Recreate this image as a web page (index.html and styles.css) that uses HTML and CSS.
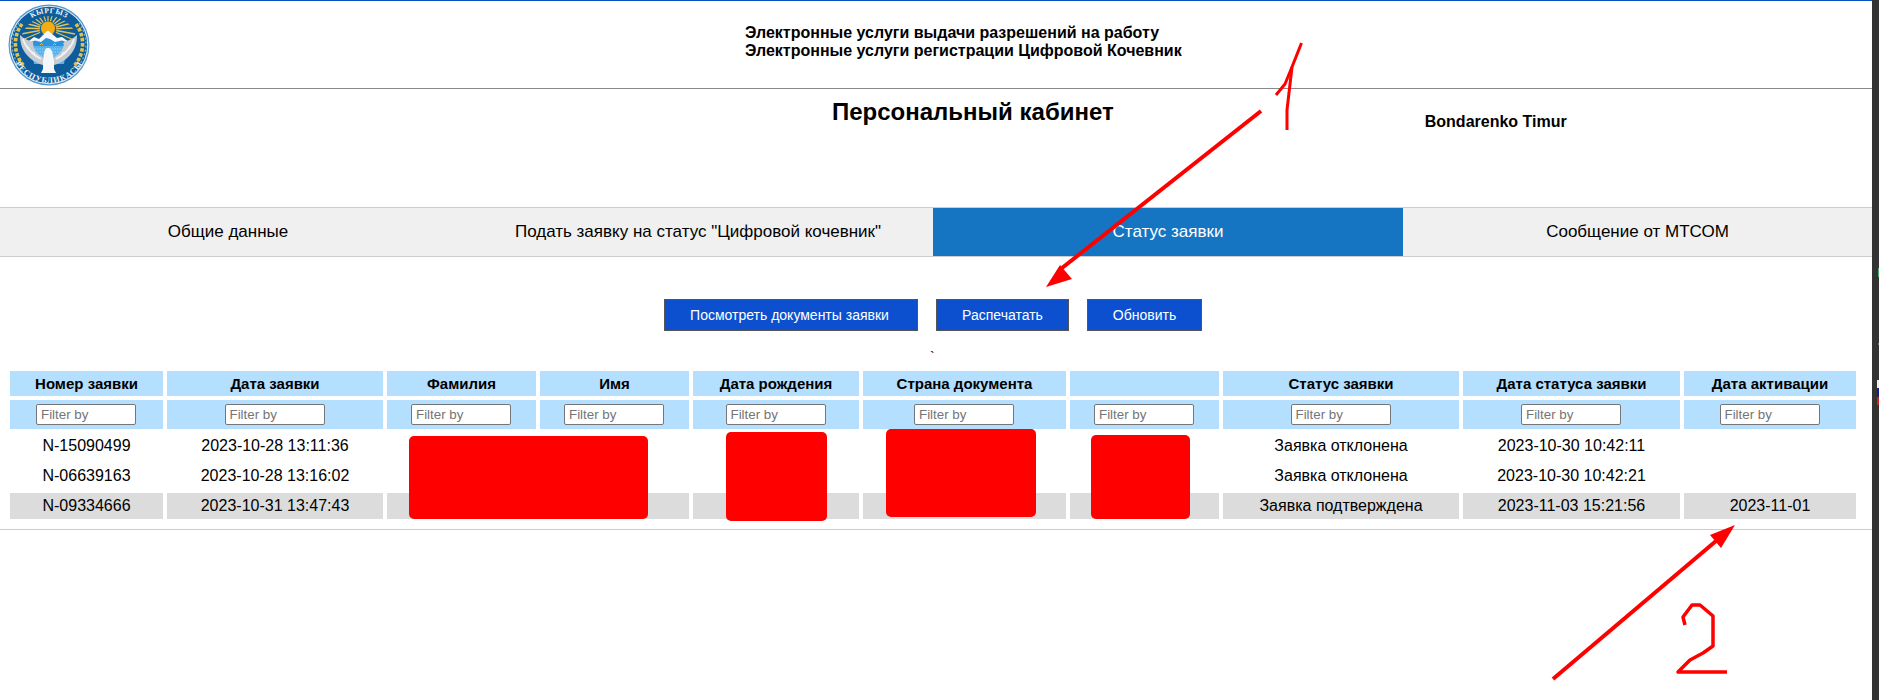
FILE: index.html
```html
<!DOCTYPE html>
<html lang="ru">
<head>
    <meta charset="UTF-8">
    <meta name="viewport" content="width=device-width, initial-scale=1.0">
    <title>Персональный кабинет</title>
    <link rel="stylesheet" href="styles.css">
</head>
<body>
    <div class="pagina">
        <header class="cabecera">
            <svg class="escudo" viewBox="0 0 82 82" width="82" height="82">
                <defs>
                    <path id="arcoArriba" d="M9 41 A32 32 0 0 1 73 41"/>
                    <path id="arcoAbajo" d="M3 41 A38 38 0 0 0 79 41"/>
                    <clipPath id="cielo"><circle cx="41" cy="41" r="29"/></clipPath>
                </defs>
                <circle cx="41" cy="41" r="40.5" fill="#4f97cf"/>
                <circle cx="41" cy="41" r="39.3" fill="#dfeaf2"/>
                <circle cx="41" cy="41" r="38.2" fill="#0d5c9c"/>
                <!-- espigas -->
                <g fill="none" stroke-linecap="butt">
                    <path d="M11 19 A36 36 0 0 0 13 64" stroke="#7fb4da" stroke-width="1.2" stroke-dasharray="2 2"/>
                    <path d="M71 19 A36 36 0 0 1 69 64" stroke="#7fb4da" stroke-width="1.2" stroke-dasharray="2 2"/>
                    <path d="M14 20 A33 33 0 0 0 16 62" stroke="#e3c14e" stroke-width="3.6" stroke-dasharray="3.5 1.6"/>
                    <path d="M68 20 A33 33 0 0 1 66 62" stroke="#e3c14e" stroke-width="3.6" stroke-dasharray="3.5 1.6"/>
                </g>
                <g clip-path="url(#cielo)">
                    <g stroke="#dcc25c" stroke-width="1.3">
                        <path d="M40 25 L14 36 M40 25 L13 30 M40 25 L14 24 M40 25 L16 19 M40 25 L19 15 M40 25 L24 12 M40 25 L29 10 M40 25 L35 9 M40 25 L40 8 M40 25 L45 9 M40 25 L51 10 M40 25 L56 12 M40 25 L61 15 M40 25 L64 19 M40 25 L66 24 M40 25 L67 30 M40 25 L66 36"/>
                    </g>
                    <rect x="16" y="40" width="50" height="24" fill="#0d5c9c"/>
                    <circle cx="40" cy="25.5" r="8.4" fill="#1a5f96"/>
                    <circle cx="40" cy="24.5" r="7" fill="#f6ad14"/>
                    <path d="M17 40 L26 33 L31 35 L37 29 L40 26.5 L44 30 L49 34 L54 33 L64 40 L40 44 Z" fill="#f3f8fc"/>
                    <path d="M17 40 L27 36.5 L33 38 L38 34 L42 35 L47 38 L54 36.5 L64 40 L58 42 L24 42 Z" fill="#2f93da"/>
                    <path d="M22 40 l1.5 -1.5 l1.5 1.5 M32 41 l1.5 -1.5 l1.5 1.5 M45 41 l1.5 -1.5 l1.5 1.5 M55 40 l1.5 -1.5 l1.5 1.5" stroke="#e3c14e" stroke-width="1" fill="none"/>
                    <path d="M23 42 H59 L56 60 H26 Z" fill="#56b2ec"/>
                    <path d="M24 45 H58 M24 48 H58 M25 51 H57 M26 54 H56 M27 57 H55" stroke="#93d0f3" stroke-width="1" stroke-dasharray="1.5 1"/>
                </g>
                <!-- halcon -->
                <path d="M12 31 C16 35 20 36 25 38 C25 44 28 50 35 53 L35 61 C28 59 22 55 18 50 C14 45 12 39 12 31 Z" fill="#c6ccd2"/>
                <path d="M69 31 C65 35 61 36 56 38 C56 44 53 50 46 53 L46 61 C53 59 59 55 63 50 C67 45 69 39 69 31 Z" fill="#c6ccd2"/>
                <path d="M36.5 47 L38.5 44 L41.5 44 L44 47 L46 56 L46 65 L48 69 L33 69 L35 65 L35 56 Z" fill="#f5f6f7"/>
                <path d="M15 35 C17 42 21 47 27 50 M19 42 C22 48 27 52 33 55 M66 35 C64 42 60 47 54 50 M62 42 C59 48 54 52 48 55" stroke="#f0f2f4" stroke-width="1.8" fill="none"/>
                <text class="escudo-arriba" fill="#f4f6f8"><textPath href="#arcoArriba" startOffset="50%" text-anchor="middle">КЫРГЫЗ</textPath></text>
                <text class="escudo-abajo" fill="#f4f6f8"><textPath href="#arcoAbajo" startOffset="50%" text-anchor="middle">РЕСПУБЛИКАСЫ</textPath></text>
            </svg>
            <div class="cabecera-texto">
                Электронные услуги выдачи разрешений на работу<br>
                Электронные услуги регистрации Цифровой Кочевник
            </div>
        </header>

        <section class="titular">
            <h1>Персональный кабинет</h1>
            <span class="usuario">Bondarenko Timur</span>
        </section>

        <nav class="pestanas">
            <a class="pestana">Общие данные</a>
            <a class="pestana pestana-segunda">Подать заявку на статус "Цифровой кочевник"</a>
            <a class="pestana activa">Статус заявки</a>
            <a class="pestana">Сообщение от МТСОМ</a>
        </nav>

        <div class="acciones">
            <button class="boton boton-docs">Посмотреть документы заявки</button>
            <button class="boton boton-imprimir">Распечатать</button>
            <button class="boton boton-actualizar">Обновить</button>
        </div>
        <div class="marca">`</div>

        <table class="tabla">
            <colgroup>
                <col class="c153"><col class="c216"><col class="c149"><col class="c149"><col class="c166">
                <col class="c203"><col class="c149"><col class="c236"><col class="c217"><col class="c172">
            </colgroup>
            <thead>
                <tr class="titulos">
                    <th>Номер заявки</th><th>Дата заявки</th><th>Фамилия</th><th>Имя</th><th>Дата рождения</th>
                    <th>Страна документа</th><th></th><th>Статус заявки</th><th>Дата статуса заявки</th><th>Дата активации</th>
                </tr>
                <tr class="filtros">
                    <th><input placeholder="Filter by"></th><th><input placeholder="Filter by"></th><th><input placeholder="Filter by"></th><th><input placeholder="Filter by"></th><th><input placeholder="Filter by"></th>
                    <th><input placeholder="Filter by"></th><th><input placeholder="Filter by"></th><th><input placeholder="Filter by"></th><th><input placeholder="Filter by"></th><th><input placeholder="Filter by"></th>
                </tr>
            </thead>
            <tbody>
                <tr>
                    <td>N-15090499</td><td>2023-10-28 13:11:36</td><td></td><td></td><td></td>
                    <td></td><td></td><td>Заявка отклонена</td><td>2023-10-30 10:42:11</td><td></td>
                </tr>
                <tr>
                    <td>N-06639163</td><td>2023-10-28 13:16:02</td><td></td><td></td><td></td>
                    <td></td><td></td><td>Заявка отклонена</td><td>2023-10-30 10:42:21</td><td></td>
                </tr>
                <tr class="gris">
                    <td>N-09334666</td><td>2023-10-31 13:47:43</td><td></td><td></td><td></td>
                    <td></td><td></td><td>Заявка подтверждена</td><td>2023-11-03 15:21:56</td><td>2023-11-01</td>
                </tr>
            </tbody>
        </table>
        <hr class="linea">

        <!-- tapado a mano sobre la captura -->
        <div class="tapa tapa-1"></div>
        <div class="tapa tapa-2"></div>
        <div class="tapa tapa-3"></div>
        <div class="tapa tapa-4"></div>
    </div>

    <!-- borde de otra ventana detras -->
    <aside class="franja">
        <i class="mota-verde"></i>
        <i class="mota-gris"></i>
        <i class="mota-bandera"></i>
    </aside>

    <svg class="notas" viewBox="0 0 1879 700" width="1879" height="700">
        <g fill="none" stroke="#ff0000" stroke-linejoin="round">
            <path d="M1261 111 L1062 268" stroke-width="4"/>
            <path d="M1301.5 43 L1292 67 L1287 110 L1287 130" stroke-width="3"/>
            <path d="M1292 67 L1285 84 L1276 95" stroke-width="3"/>
            <path d="M1553 679 L1716 541" stroke-width="4"/>
            <path d="M1685 625 L1683 617 L1692 605 L1700 605 L1713 616 L1713 646 L1703 653 L1690 660 L1678 672 L1727 672 " stroke-width="3.5"/>
        </g>
        <path d="M1046 287 L1060 265 L1072 279 Z" fill="#ff0000"/>
        <path d="M1735 525 L1710 535 L1721 548 Z" fill="#ff0000"/>
    </svg>
</body>
</html>
```

FILE: styles.css
```css
/* Estilos generales */
html, body {
    margin: 0;
    height: 700px;
    overflow: hidden;
    background: #333;
}
body {
    font-family: "Liberation Sans", Arial, sans-serif;
    color: #000;
    position: relative;
}

.pagina {
    position: relative;
    width: 1872px;
    height: 700px;
    background: #fff;
    border-top: 1px solid #0b50c8;
    box-sizing: border-box;
}

/* Cabecera con el escudo */
.cabecera {
    display: flex;
    height: 87px;
    border-bottom: 1px solid #888;
    box-sizing: content-box;
}
.escudo {
    margin: 3px 0 0 8px;
    flex: none;
}
.escudo-arriba {
    font: bold 7.5px "Liberation Serif", serif;
    letter-spacing: 0.6px;
}
.escudo-abajo {
    font: bold 8px "Liberation Serif", serif;
    letter-spacing: 0.9px;
}
.cabecera-texto {
    margin: 23px 0 0 655px;
    font-size: 16px;
    font-weight: bold;
    line-height: 18px;
}

/* Titulo y usuario */
.titular {
    display: flex;
    height: 118px;
    box-sizing: border-box;
    padding: 9px 0 0 832px;
}
.titular h1 {
    margin: 0;
    font-size: 24px;
    line-height: 28px;
    font-weight: bold;
}
.usuario {
    margin: 15px 0 0 311px;
    font-size: 16px;
    line-height: 18px;
    font-weight: bold;
}

/* Pestanas */
.pestanas {
    display: grid;
    grid-template-columns: 456px 477px 470px 1fr;
    height: 50px;
    background: #f0f0f0;
    border-top: 1px solid #ccc;
    border-bottom: 1px solid #ccc;
    box-sizing: border-box;
}
.pestana {
    display: flex;
    justify-content: center;
    align-items: center;
    font-size: 17px;
}
.pestana-segunda {
    padding-left: 7px;
}
.activa {
    background: #1675c2;
    color: #fff;
}

/* Botones */
.acciones {
    display: flex;
    gap: 18px;
    margin: 42px 0 0 664px;
}
.boton {
    height: 32px;
    padding: 0;
    border: 1px solid #555;
    background: #0c50cf;
    color: #fff;
    font-family: inherit;
    font-size: 14px;
    cursor: pointer;
}
.boton-docs { width: 254px; padding-right: 3px; }
.boton-imprimir { width: 133px; }
.boton-actualizar { width: 115px; }

.marca {
    height: 36px;
    padding: 18px 0 0 930px;
    box-sizing: border-box;
    font-size: 14px;
    line-height: 16px;
}

/* Tabla */
.tabla {
    table-layout: fixed;
    width: 1854px;
    margin: 0 0 0 6px;
    border-collapse: separate;
    border-spacing: 4px;
    font-size: 16px;
    text-align: center;
}
.c149 { width: 149px; }
.c153 { width: 153px; }
.c166 { width: 166px; }
.c172 { width: 172px; }
.c203 { width: 203px; }
.c216 { width: 216px; }
.c217 { width: 217px; }
.c236 { width: 236px; }
.titulos th {
    height: 25px;
    padding: 0;
    background: #b5dffe;
    font-size: 15px;
}
.filtros th {
    height: 29px;
    padding: 0;
    background: #b5dffe;
}
.filtros input {
    display: block;
    width: 100px;
    height: 21px;
    margin: 0 0 0 calc(50% - 50.5px);
    padding: 1px 4px;
    box-sizing: border-box;
    border: 1px solid #767676;
    border-radius: 2px;
    font-family: inherit;
    font-size: 13.33px;
}
.tabla td {
    height: 26px;
    padding: 0;
}
.gris td {
    background: #dcdcdc;
}
.linea {
    margin: 6px 0 0;
    border: 0;
    border-top: 1px solid #ccc;
}

/* Tapas rojas sobre datos personales */
.tapa {
    position: absolute;
    background: #ff0000;
    border-radius: 5px;
}
.tapa-1 { left: 409px; top: 435px; width: 239px; height: 83px; }
.tapa-2 { left: 726px; top: 431px; width: 101px; height: 89px; }
.tapa-3 { left: 886px; top: 428px; width: 150px; height: 88px; }
.tapa-4 { left: 1091px; top: 434px; width: 99px; height: 84px; }

/* Franja oscura a la derecha */
.franja {
    position: absolute;
    left: 1872px;
    top: 0;
    width: 7px;
    height: 700px;
}
.franja i {
    position: absolute;
    display: block;
}
.mota-verde {
    left: 6px;
    top: 268px;
    width: 1px;
    height: 9px;
    background: #4fae74;
}
.mota-gris {
    left: 6px;
    top: 343px;
    width: 1px;
    height: 2px;
    background: #777;
}
.mota-bandera {
    left: 5px;
    top: 380px;
    width: 2px;
    height: 25px;
    background: linear-gradient(#eee 33%, #1a1a8c 33%, #1a1a8c 66%, #e01818 66%);
}

/* Anotaciones a mano */
.notas {
    position: absolute;
    left: 0;
    top: 0;
    pointer-events: none;
}
```
